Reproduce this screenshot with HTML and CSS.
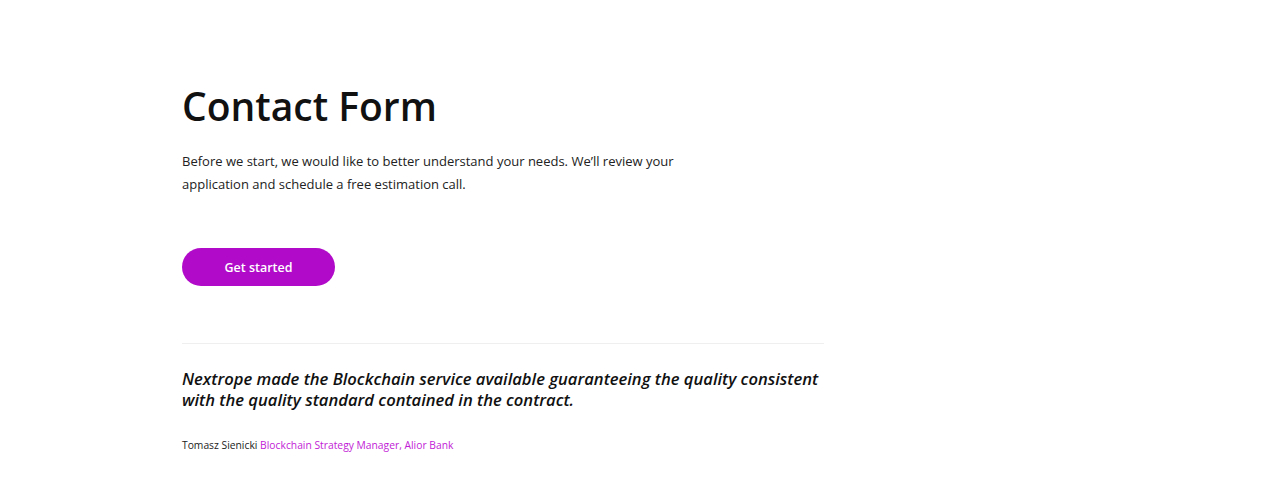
FILE: index.html
```html
<!DOCTYPE html>
<html lang="en">
<head>
    <meta charset="UTF-8">
    <meta name="viewport" content="width=device-width, initial-scale=1.0">
    <title>Contact Form</title>
    <link rel="stylesheet" href="styles.css">
</head>
<body>

<div class="contact-section">
    <h1>Contact Form</h1>
    <p class="intro">Before we start, we would like to better understand your needs. We’ll review your application and schedule a free estimation call.</p>

    <button class="start-btn">Get started</button>

    <div class="testimonial">
        <p class="quote">Nextrope made the Blockchain service available guaranteeing the quality consistent with the quality standard contained in the contract.</p>
        <p class="author">Tomasz Sienicki <span class="author-role">Blockchain Strategy Manager, Alior Bank</span></p>
    </div>
</div>

</body>
</html>
```

FILE: styles.css
```css
body {
    margin: 0;
    background-color: #ffffff;
    font-family: "Open Sans", Arial, sans-serif;
    color: #1a1a1a;
}
.contact-section {
    width: 642px;
    padding: 82px 0 0 182px;
}
h1 {
    margin: 0;
    font-size: 39px;
    font-weight: 600;
    line-height: 48px;
    color: #111;
}
.intro {
    width: 500px;
    margin: 20px 0 0;
    font-size: 13px;
    line-height: 23px;
    font-weight: 500;
    color: #222;
}
.start-btn {
    display: block;
    margin-top: 52px;
    width: 153px;
    height: 38px;
    border: none;
    border-radius: 19px;
    background-color: #b10bc9;
    color: white;
    font-family: inherit;
    font-size: 12.5px;
    font-weight: 600;
    cursor: pointer;
}
.testimonial {
    margin-top: 57px;
    border-top: 1px solid #efefef;
    padding-top: 24px;
}
.quote {
    margin: 0;
    font-size: 16.6px;
    line-height: 21px;
    font-style: italic;
    font-weight: 600;
    color: #111;
}
.author {
    margin: 28px 0 0;
    font-size: 10.3px;
    color: #222;
}
.author-role {
    color: #c21ad6;
}
```
